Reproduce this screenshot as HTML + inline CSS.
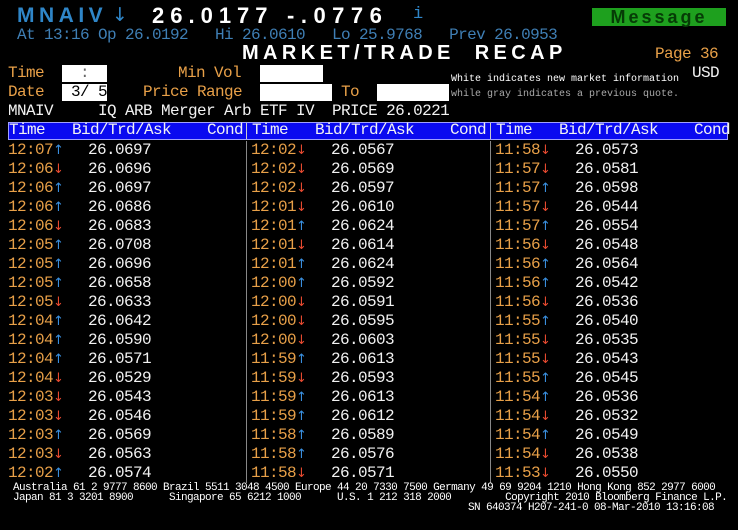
<!DOCTYPE html>
<html><head><meta charset="utf-8"><style>
body{margin:0;background:#000;width:738px;height:530px;overflow:hidden;position:relative;font-family:"Liberation Mono",monospace}
.a{position:absolute;white-space:pre}
.m{font-size:16px;letter-spacing:-0.6px}
.o{color:#e8a048}
.w{color:#f2f2f2}
.bl{color:#3f7fb5}
.box{position:absolute;background:#fff}
.col{position:absolute;top:141px;font-size:16px;letter-spacing:-0.6px;line-height:19px}
.col div{height:19px;white-space:pre;position:relative}
.t{color:#e8a048}
.u{color:#3a90e0;font-family:"DejaVu Sans",sans-serif;font-size:13px;letter-spacing:0}
.d{color:#e84a30;font-family:"DejaVu Sans",sans-serif;font-size:13px;letter-spacing:0}
.p{position:absolute;left:80px;color:#f2f2f2}
.ft{position:absolute;font-size:11px;color:#fff;white-space:pre;letter-spacing:-0.6px;line-height:10px}
</style></head><body>
<div class="a" style="left:17px;top:4px;font-family:'Liberation Sans',sans-serif;font-weight:bold;font-size:21px;letter-spacing:4.5px;color:#2f86c8">MNAIV</div>
<div class="a" style="left:112px;top:4px;font-family:'DejaVu Sans',sans-serif;font-size:19px;color:#2f86c8">↓</div>
<div class="a" style="left:152px;top:3px;font-family:'Liberation Sans',sans-serif;font-weight:bold;font-size:22px;letter-spacing:6px;color:#fff">26.0177</div>
<div class="a" style="left:287px;top:3px;font-family:'Liberation Sans',sans-serif;font-weight:bold;font-size:22px;letter-spacing:6.5px;color:#fff">-.0776</div>
<div class="a" style="left:413px;top:5px;font-size:17px;color:#2f86c8">i</div>
<div class="a" style="left:592px;top:8px;width:134px;height:18px;background:#1ea01e;color:#063c06;font-family:'Liberation Sans',sans-serif;font-weight:bold;font-size:18px;letter-spacing:3px;line-height:18px;text-align:center">Message</div>
<div class="a m bl" style="left:17px;top:26px">At 13:16 Op 26.0192   Hi 26.0610   Lo 25.9768   Prev 26.0953</div>
<div class="a" style="left:242px;top:42px;font-family:'Liberation Sans',sans-serif;font-weight:bold;font-size:20px;letter-spacing:4.4px;color:#fff">MARKET/TRADE  RECAP</div>
<div class="a m o" style="left:655px;top:45px">Page 36</div>
<div class="a m w" style="left:692px;top:64px">USD</div>
<div class="a m o" style="left:8px;top:64px">Time</div>
<div class="box" style="left:62px;top:65px;width:45px;height:17px"></div>
<div class="a m" style="left:80px;top:64px;color:#666">:</div>
<div class="a m o" style="left:178px;top:64px">Min Vol</div>
<div class="box" style="left:260px;top:65px;width:63px;height:17px"></div>
<div class="a m o" style="left:8px;top:83px">Date</div>
<div class="box" style="left:62px;top:84px;width:45px;height:17px"></div>
<div class="a m" style="left:71px;top:83px;color:#000">3/ 5</div>
<div class="a m o" style="left:143px;top:83px">Price Range</div>
<div class="box" style="left:260px;top:84px;width:72px;height:17px"></div>
<div class="a m o" style="left:341px;top:83px">To</div>
<div class="box" style="left:377px;top:84px;width:72px;height:17px"></div>
<div class="a" style="left:451px;top:74px;font-size:10px;color:#fff">White indicates new market information</div>
<div class="a" style="left:451px;top:89px;font-size:10px;color:#aaa">while gray indicates a previous quote.</div>
<div class="a m w" style="left:8px;top:102px">MNAIV     IQ ARB Merger Arb ETF IV  PRICE 26.0221</div>
<div class="a" style="left:8px;top:122px;width:718px;height:16px;background:#0a0af0;border:1px solid #a0a0ff"></div>
<div class="a m w" style="left:9px;top:121px">Time   Bid/Trd/Ask    Cond</div>
<div class="a m w" style="left:252px;top:121px">Time   Bid/Trd/Ask    Cond</div>
<div class="a m w" style="left:496px;top:121px">Time   Bid/Trd/Ask    Cond</div>
<div class="a" style="left:246px;top:123px;width:1px;height:16px;background:#ccc"></div>
<div class="a" style="left:490px;top:123px;width:1px;height:16px;background:#ccc"></div>
<div class="a" style="left:246px;top:141px;width:1px;height:342px;background:#888"></div>
<div class="a" style="left:490px;top:141px;width:1px;height:342px;background:#888"></div>

<div class="col" style="left:8px">
<div><span class="t">12:07</span><span class="u">↑</span><span class="p">26.0697</span></div>
<div><span class="t">12:06</span><span class="d">↓</span><span class="p">26.0696</span></div>
<div><span class="t">12:06</span><span class="u">↑</span><span class="p">26.0697</span></div>
<div><span class="t">12:06</span><span class="u">↑</span><span class="p">26.0686</span></div>
<div><span class="t">12:06</span><span class="d">↓</span><span class="p">26.0683</span></div>
<div><span class="t">12:05</span><span class="u">↑</span><span class="p">26.0708</span></div>
<div><span class="t">12:05</span><span class="u">↑</span><span class="p">26.0696</span></div>
<div><span class="t">12:05</span><span class="u">↑</span><span class="p">26.0658</span></div>
<div><span class="t">12:05</span><span class="d">↓</span><span class="p">26.0633</span></div>
<div><span class="t">12:04</span><span class="u">↑</span><span class="p">26.0642</span></div>
<div><span class="t">12:04</span><span class="u">↑</span><span class="p">26.0590</span></div>
<div><span class="t">12:04</span><span class="u">↑</span><span class="p">26.0571</span></div>
<div><span class="t">12:04</span><span class="d">↓</span><span class="p">26.0529</span></div>
<div><span class="t">12:03</span><span class="d">↓</span><span class="p">26.0543</span></div>
<div><span class="t">12:03</span><span class="d">↓</span><span class="p">26.0546</span></div>
<div><span class="t">12:03</span><span class="u">↑</span><span class="p">26.0569</span></div>
<div><span class="t">12:03</span><span class="d">↓</span><span class="p">26.0563</span></div>
<div><span class="t">12:02</span><span class="u">↑</span><span class="p">26.0574</span></div>
</div>
<div class="col" style="left:251px">
<div><span class="t">12:02</span><span class="d">↓</span><span class="p">26.0567</span></div>
<div><span class="t">12:02</span><span class="d">↓</span><span class="p">26.0569</span></div>
<div><span class="t">12:02</span><span class="d">↓</span><span class="p">26.0597</span></div>
<div><span class="t">12:01</span><span class="d">↓</span><span class="p">26.0610</span></div>
<div><span class="t">12:01</span><span class="u">↑</span><span class="p">26.0624</span></div>
<div><span class="t">12:01</span><span class="d">↓</span><span class="p">26.0614</span></div>
<div><span class="t">12:01</span><span class="u">↑</span><span class="p">26.0624</span></div>
<div><span class="t">12:00</span><span class="u">↑</span><span class="p">26.0592</span></div>
<div><span class="t">12:00</span><span class="d">↓</span><span class="p">26.0591</span></div>
<div><span class="t">12:00</span><span class="d">↓</span><span class="p">26.0595</span></div>
<div><span class="t">12:00</span><span class="d">↓</span><span class="p">26.0603</span></div>
<div><span class="t">11:59</span><span class="u">↑</span><span class="p">26.0613</span></div>
<div><span class="t">11:59</span><span class="d">↓</span><span class="p">26.0593</span></div>
<div><span class="t">11:59</span><span class="u">↑</span><span class="p">26.0613</span></div>
<div><span class="t">11:59</span><span class="u">↑</span><span class="p">26.0612</span></div>
<div><span class="t">11:58</span><span class="u">↑</span><span class="p">26.0589</span></div>
<div><span class="t">11:58</span><span class="u">↑</span><span class="p">26.0576</span></div>
<div><span class="t">11:58</span><span class="d">↓</span><span class="p">26.0571</span></div>
</div>
<div class="col" style="left:495px">
<div><span class="t">11:58</span><span class="d">↓</span><span class="p">26.0573</span></div>
<div><span class="t">11:57</span><span class="d">↓</span><span class="p">26.0581</span></div>
<div><span class="t">11:57</span><span class="u">↑</span><span class="p">26.0598</span></div>
<div><span class="t">11:57</span><span class="d">↓</span><span class="p">26.0544</span></div>
<div><span class="t">11:57</span><span class="u">↑</span><span class="p">26.0554</span></div>
<div><span class="t">11:56</span><span class="d">↓</span><span class="p">26.0548</span></div>
<div><span class="t">11:56</span><span class="u">↑</span><span class="p">26.0564</span></div>
<div><span class="t">11:56</span><span class="u">↑</span><span class="p">26.0542</span></div>
<div><span class="t">11:56</span><span class="d">↓</span><span class="p">26.0536</span></div>
<div><span class="t">11:55</span><span class="u">↑</span><span class="p">26.0540</span></div>
<div><span class="t">11:55</span><span class="d">↓</span><span class="p">26.0535</span></div>
<div><span class="t">11:55</span><span class="d">↓</span><span class="p">26.0543</span></div>
<div><span class="t">11:55</span><span class="u">↑</span><span class="p">26.0545</span></div>
<div><span class="t">11:54</span><span class="u">↑</span><span class="p">26.0536</span></div>
<div><span class="t">11:54</span><span class="d">↓</span><span class="p">26.0532</span></div>
<div><span class="t">11:54</span><span class="u">↑</span><span class="p">26.0549</span></div>
<div><span class="t">11:54</span><span class="d">↓</span><span class="p">26.0538</span></div>
<div><span class="t">11:53</span><span class="d">↓</span><span class="p">26.0550</span></div>
</div>

<div class="ft" style="left:13px;top:483px">Australia 61 2 9777 8600 Brazil 5511 3048 4500 Europe 44 20 7330 7500 Germany 49 69 9204 1210 Hong Kong 852 2977 6000</div>
<div class="ft" style="left:13px;top:493px">Japan 81 3 3201 8900      Singapore 65 6212 1000      U.S. 1 212 318 2000         Copyright 2010 Bloomberg Finance L.P.</div>
<div class="ft" style="left:468px;top:503px">SN 640374 H207-241-0 08-Mar-2010 13:16:08</div>
</body></html>
